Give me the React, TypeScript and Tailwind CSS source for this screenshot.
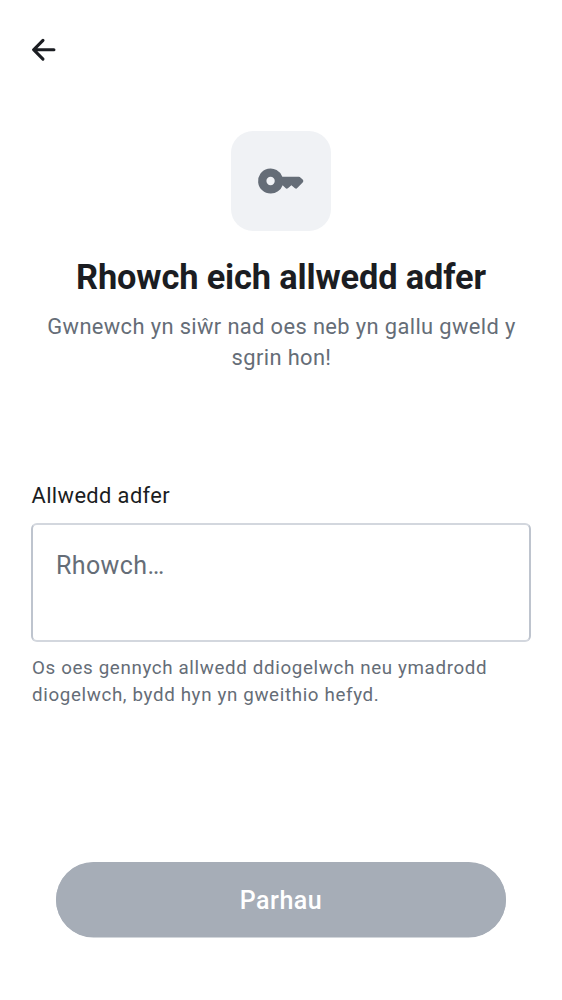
export default function App() {
  return (
    <main className="flex h-[1000px] w-[562px] flex-col bg-white px-8 font-['Roboto',sans-serif] text-[#1b1d22]">
      <header className="pt-[31px]">
        <button aria-label="Yn ôl" className="-ml-[7.5px] block">
          <svg width="37.5" height="37.5" viewBox="0 0 24 24" fill="currentColor">
            <path d="M12.207 5.293a1 1 0 0 1 0 1.414L7.914 11H18.5a1 1 0 1 1 0 2H7.914l4.293 4.293a1 1 0 0 1-1.414 1.414l-6-6a1 1 0 0 1 0-1.414l6-6a1 1 0 0 1 1.414 0Z" />
          </svg>
        </button>
      </header>
      <section className="flex flex-col items-center pt-[62.5px] text-center">
        <div className="flex size-[100px] items-center justify-center rounded-[22px] bg-[#f0f2f5] text-[#656d77]">
          <svg width="50" height="50" viewBox="0 0 24 24" fill="currentColor">
            <path fillRule="evenodd" d="M7 18a6 6 0 1 1 5.650-8H20.600q.4 0 .7.300l1.100 1q.3.300.3.700t-.3.700L19.800 15.400q-.5.500-1.100.050L17 14.050l-1.700 1.400q-.6.450-1.150-.050L12.800 14A6 6 0 0 1 7 18Zm0-4a2 2 0 1 0 0-4 2 2 0 0 0 0 4Z" />
          </svg>
        </div>
        <h1 className="mt-6 text-[34.375px] leading-[44px] font-bold tracking-[-0.14px] whitespace-nowrap">Rhowch eich allwedd adfer</h1>
        <p className="mt-3 pl-px text-[21.875px] leading-[31px] tracking-[0.38px] text-[#656d77]">
          Gwnewch yn siŵr nad oes neb yn gallu gweld y<br />sgrin hon!
        </p>
      </section>
      <section className="mt-[106px]">
        <label htmlFor="key" className="-ml-[0.5px] block text-[21.875px] leading-[34px] tracking-[0.39px]">Allwedd adfer</label>
        <textarea id="key" placeholder="Rhowch…" className="-mx-px mt-2.5 block h-[119px] w-[500px] resize-none rounded-[6px] border-2 border-x-[#bec4ce] border-y-[#d3d7de] px-[23px] py-[22px] text-[25px] leading-[38px] tracking-[0.39px] outline-none placeholder:text-[#656d77]" />
        <p className="mt-[13px] text-[18.75px] leading-[27px] tracking-[0.64px] text-[#656d77]">
          Os oes gennych allwedd ddiogelwch neu ymadrodd<br />diogelwch, bydd hyn yn gweithio hefyd.
        </p>
      </section>
      <button className="mx-6 mt-auto mb-[63px] h-[75px] rounded-full bg-[#a6adb7] pt-0.5 text-[25px] font-medium tracking-[0.5px] text-white shadow-[0_0.5px_0_#a6adb7]">Parhau</button>
    </main>
  );
}
